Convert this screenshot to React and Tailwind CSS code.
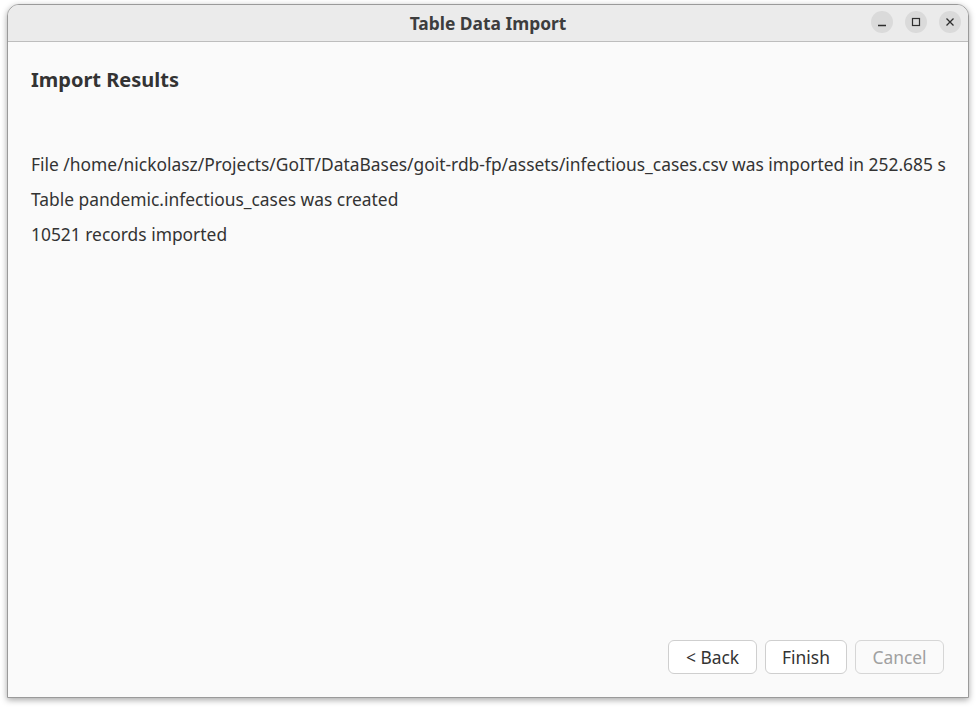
import React from "react";

const FONT = { fontFamily: '"Noto Sans", "Open Sans", sans-serif' };

const TitleButton = ({ children }) => (
  <div className="w-[22px] h-[22px] rounded-full bg-[#dadada] flex items-center justify-center text-[#2e2e2e]">
    {children}
  </div>
);

const DialogButton = ({ children, disabled, width }) => (
  <button
    type="button"
    disabled={disabled}
    className={
      (disabled
        ? "h-[34px] rounded-[6px] border border-[#d6d6d6] bg-[#fafafa] text-[#a0a0a0] text-[17.4px] leading-[30px] "
        : "h-[34px] rounded-[6px] border border-[#cfcfcf] bg-white text-[#333333] text-[17.4px] leading-[30px] ") + width
    }
  >
    {children}
  </button>
);

export default function App() {
  return (
    <div className="w-[976px] h-[707px] bg-white pt-[4px] pl-[7px]" style={FONT}>
      <div className="w-[962px] h-[694px] rounded-t-[12px] border border-[#9a9a9a] bg-[#fafafa] shadow-[0_2px_6px_rgba(0,0,0,0.35)] flex flex-col overflow-hidden">
        {/* header bar */}
        <div className="h-[37px] shrink-0 bg-[#ebebeb] border-b border-[#bdbdbd] relative flex items-center justify-center">
          <span className="text-[17.4px] font-bold text-[#3d3d3d] leading-[24px] -mt-[1px]">Table Data Import</span>
          <div className="absolute right-[7px] top-[6px] flex gap-[12px]">
            <TitleButton>
              <svg width="10" height="10" viewBox="0 0 10 10">
                <path d="M1 8.5h8" stroke="currentColor" strokeWidth="1.3" />
              </svg>
            </TitleButton>
            <TitleButton>
              <svg width="10" height="10" viewBox="0 0 10 10">
                <rect x="1.5" y="1.5" width="7" height="7" fill="none" stroke="currentColor" strokeWidth="1.2" />
              </svg>
            </TitleButton>
            <TitleButton>
              <svg width="10" height="10" viewBox="0 0 10 10">
                <path d="M1.5 1.5l7 7M8.5 1.5l-7 7" stroke="currentColor" strokeWidth="1.3" />
              </svg>
            </TitleButton>
          </div>
        </div>

        {/* body */}
        <div className="flex-1 flex flex-col px-[23px] pt-[24px] pb-[23px]">
          <h1 className="text-[20px] font-bold text-[#333333] leading-[28px]">Import Results</h1>
          <div className="mt-[57px] flex flex-col gap-[9px] text-[17.4px] text-[#333333] leading-[26px] whitespace-nowrap">
            <p>File /home/nickolasz/Projects/GoIT/DataBases/goit-rdb-fp/assets/infectious_cases.csv was imported in 252.685 s</p>
            <p>Table pandemic.infectious_cases was created</p>
            <p>10521 records imported</p>
          </div>
          <div className="mt-auto flex justify-end gap-[8px] pr-[1px]">
            <DialogButton width="w-[89px]">&lt; Back</DialogButton>
            <DialogButton width="w-[82px]">Finish</DialogButton>
            <DialogButton width="w-[89px]" disabled>Cancel</DialogButton>
          </div>
        </div>
      </div>
    </div>
  );
}
